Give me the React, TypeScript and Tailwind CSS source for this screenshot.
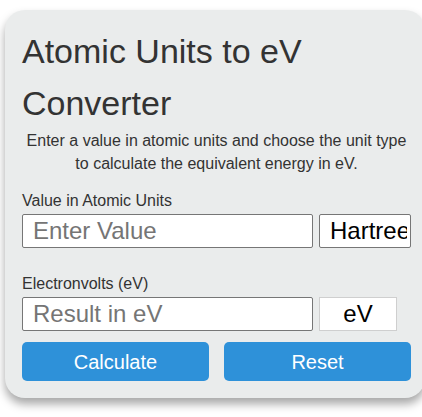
import React from "react";

export default function App() {
  return (
    <div className="w-[422px] h-[417px] overflow-hidden bg-white" style={{ fontFamily: '"Liberation Sans", Arial, sans-serif' }}>
      <div className="ml-[5px] mt-[10px] w-[420px] rounded-[20px] bg-[#eaecec] pl-[17px] pr-[14px] pt-[15px] pb-[17px] shadow-[0_6px_10px_rgba(0,0,0,0.35)]">
        <h1 className="text-[34px] leading-[52px] text-[#333333] font-normal">Atomic Units to eV Converter</h1>
        <p className="text-center text-[16px] leading-[23px] text-[#333333]">
          Enter a value in atomic units and choose the unit type to calculate the equivalent energy in eV.
        </p>
        <div className="mt-[14px] text-[16px] leading-[24px] text-[#333333]">Value in Atomic Units</div>
        <div className="mt-[1px] flex gap-[6px]">
          <input
            placeholder="Enter Value"
            className="h-[34px] w-[291px] rounded-[2px] border border-[#767676] bg-white px-[10px] text-[24px] text-black placeholder:text-[#757575] outline-none"
          />
          <div className="h-[34px] w-[92px] rounded-[2px] border border-[#767676] bg-white pl-[10px] text-[24px] leading-[32px] text-black">
            <span className="block w-[77px] overflow-hidden whitespace-nowrap">Hartree</span>
          </div>
        </div>
        <div className="mt-[24px] text-[16px] leading-[24px] text-[#333333]">Electronvolts (eV)</div>
        <div className="mt-[1px] flex gap-[6px]">
          <input
            placeholder="Result in eV"
            readOnly
            className="h-[34px] w-[291px] rounded-[2px] border border-[#767676] bg-white px-[10px] text-[24px] text-black placeholder:text-[#757575] outline-none"
          />
          <div className="h-[34px] w-[78px] border border-[#cfcfcf] bg-white text-center text-[24px] leading-[32px] text-black">
            eV
          </div>
        </div>
        <div className="mt-[11px] flex gap-[15px]">
          <button className="h-[39px] w-[187px] rounded-[5px] bg-[#2e91d9] text-[20px] text-white">Calculate</button>
          <button className="h-[39px] w-[187px] rounded-[5px] bg-[#2e91d9] text-[20px] text-white">Reset</button>
        </div>
      </div>
    </div>
  );
}
